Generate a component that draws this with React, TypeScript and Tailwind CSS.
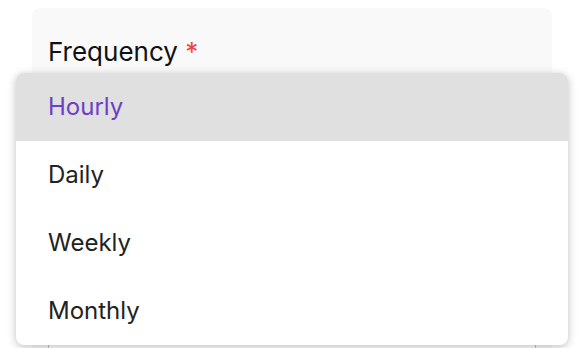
const options = ['Hourly', 'Daily', 'Weekly', 'Monthly'];

export default function App() {
  return (
    <div className="relative h-[348px] w-[582px] overflow-hidden bg-white font-['Inter',sans-serif]">
      <div className="ml-8 mt-2 w-[520px] rounded-lg bg-[#f9f9f9] px-4 pt-[28px] pb-6">
        <label className="block text-[26px] leading-[32px] text-[#111]">
          Frequency <span className="text-[#ef4444]">*</span>
        </label>
        <div className="mt-[240px] h-12 rounded border border-[#bdbdbd] bg-white" />
      </div>

      <ul className="absolute left-4 top-[73px] w-[552px] overflow-hidden rounded-lg bg-white shadow-[0_2px_8px_rgba(0,0,0,0.25)]">
        {options.map((o, i) => (
          <li
            key={o}
            className={
              i === 0
                ? 'flex h-[68px] items-center bg-[#e0e0e0] px-8 text-[24px] text-[#6b3fc6]'
                : 'flex h-[68px] items-center px-8 text-[24px] text-[#222]'
            }
          >
            {o}
          </li>
        ))}
      </ul>
    </div>
  );
}
